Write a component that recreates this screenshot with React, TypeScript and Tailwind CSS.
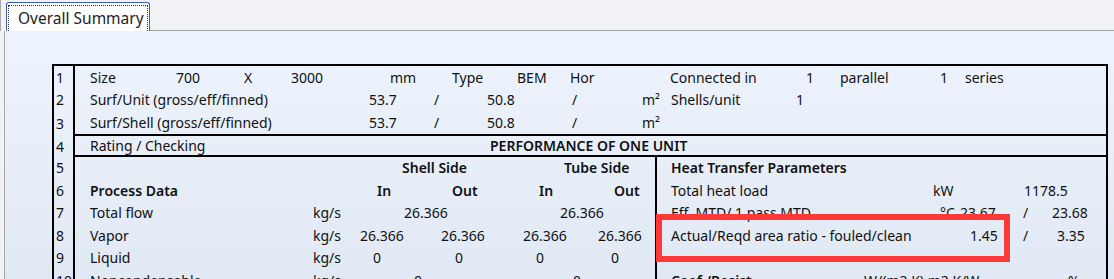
import React from "react";

const font = { fontFamily: '"Noto Sans", "Open Sans", sans-serif' };

// one table row: number cell on the left, content on the right
const Row = ({
  n,
  h = "h-[22.5px]",
  line = "",
  children,
}: {
  n: string;
  h?: string;
  line?: string;
  children?: React.ReactNode;
}) => (
  <div className="flex">
    <div className="flex w-[21px] shrink-0 items-center border-r-2 border-black pl-[2px]">
      <span className={h + " flex items-center"}>{n}</span>
    </div>
    <div className={"flex min-w-0 flex-1 " + line}>
      <div className={"flex w-full items-center " + h}>{children}</div>
    </div>
  </div>
);

const C = ({
  w = "",
  b = false,
  children,
}: {
  w?: string;
  b?: boolean;
  children?: React.ReactNode;
}) => (
  <span className={"shrink-0 whitespace-nowrap " + w + (b ? " font-semibold" : "")}>
    {children}
  </span>
);

// lower section: process data on the left, heat transfer on the right
const Split = ({ left, right }: { left?: React.ReactNode; right?: React.ReactNode }) => (
  <>
    <div className="flex h-full w-[580px] shrink-0 items-center pl-[15px]">{left}</div>
    <div className="flex h-full flex-1 items-center border-l-2 border-black pl-[14px]">{right}</div>
  </>
);

export default function App() {
  return (
    <div
      className="relative h-[279px] w-[1114px] overflow-hidden bg-[#f0f2f6] text-[14px] text-[#111]"
      style={font}
    >
      {/* tab strip */}
      <div className="flex h-[31px] border-l border-[#a8a8a8] pl-[5px]">
        <div className="mt-[2px] flex h-[29px] w-[144px] rounded-t-[3px] border border-b-0 border-[#3d5fb3] bg-white px-[1px] pt-[2px]">
          <div className="flex h-full w-full items-center border border-b-0 border-dotted border-[#333] pl-[9px] text-[15.5px] text-[#222]">
            Overall Summary
          </div>
        </div>
        <div className="flex-1 self-end border-b border-[#a0a0a0]" />
      </div>

      {/* content panel */}
      <div className="ml-[4px] h-[248px] border-l border-[#a8a8a8] bg-gradient-to-b from-[#eef4fd] to-[#e1e9f4] pl-[47px] pt-[33px]">
        <div className="w-[1056px] border-x-2 border-t-2 border-black">
          <Row n="1">
            <div className="flex pl-[15px]">
              <C w="w-[86px]">Size</C>
              <C w="w-[68px]">700</C>
              <C w="w-[47px]">X</C>
              <C w="w-[99px]">3000</C>
              <C w="w-[62px]">mm</C>
              <C w="w-[65px]">Type</C>
              <C w="w-[53px]">BEM</C>
              <C w="w-[100px]">Hor</C>
              <C w="w-[136px]">Connected in</C>
              <C w="w-[34px]">1</C>
              <C w="w-[100px]">parallel</C>
              <C w="w-[25px]">1</C>
              <C>series</C>
            </div>
          </Row>
          <Row n="2">
            <div className="flex pl-[15px]">
              <C w="w-[279px]">Surf/Unit (gross/eff/finned)</C>
              <C w="w-[65px]">53.7</C>
              <C w="w-[53px]">/</C>
              <C w="w-[85px]">50.8</C>
              <C w="w-[70px]">/</C>
              <C w="w-[29px]">m²</C>
              <C w="w-[125px]">Shells/unit</C>
              <C>1</C>
            </div>
          </Row>
          <Row n="3" line="border-b-2 border-black">
            <div className="flex pl-[15px]">
              <C w="w-[279px]">Surf/Shell (gross/eff/finned)</C>
              <C w="w-[65px]">53.7</C>
              <C w="w-[53px]">/</C>
              <C w="w-[85px]">50.8</C>
              <C w="w-[70px]">/</C>
              <C>m²</C>
            </div>
          </Row>
          <Row n="4" h="h-[19px]" line="border-b-2 border-black">
            <div className="flex pl-[15px]">
              <C w="w-[400px]">Rating / Checking</C>
              <C b>PERFORMANCE OF ONE UNIT</C>
            </div>
          </Row>
          <Row n="5">
            <Split
              left={
                <>
                  <C w="w-[312px]" />
                  <C w="w-[162px]" b>Shell Side</C>
                  <C b>Tube Side</C>
                </>
              }
              right={<C b>Heat Transfer Parameters</C>}
            />
          </Row>
          <Row n="6">
            <Split
              left={
                <>
                  <C w="w-[287px]" b>Process Data</C>
                  <C w="w-[75px]" b>In</C>
                  <C w="w-[87px]" b>Out</C>
                  <C w="w-[75px]" b>In</C>
                  <C b>Out</C>
                </>
              }
              right={
                <>
                  <C w="w-[262px]">Total heat load</C>
                  <C w="w-[91px]">kW</C>
                  <C>1178.5</C>
                </>
              }
            />
          </Row>
          <Row n="7">
            <Split
              left={
                <>
                  <C w="w-[223px]">Total flow</C>
                  <C w="w-[91px]">kg/s</C>
                  <C w="w-[156px]">26.366</C>
                  <C>26.366</C>
                </>
              }
              right={
                <>
                  <C w="w-[269px]">Eff. MTD/ 1 pass MTD</C>
                  <C w="w-[20px]">°C</C>
                  <C w="w-[63px]">23.67</C>
                  <C w="w-[29px]">/</C>
                  <C>23.68</C>
                </>
              }
            />
          </Row>
          <Row n="8">
            <Split
              left={
                <>
                  <C w="w-[223px]">Vapor</C>
                  <C w="w-[47px]">kg/s</C>
                  <C w="w-[81px]">26.366</C>
                  <C w="w-[82px]">26.366</C>
                  <C w="w-[75px]">26.366</C>
                  <C>26.366</C>
                </>
              }
              right={
                <>
                  <C w="w-[299px]">Actual/Reqd area ratio - fouled/clean</C>
                  <C w="w-[53px]">1.45</C>
                  <C w="w-[34px]">/</C>
                  <C>3.35</C>
                </>
              }
            />
          </Row>
          <Row n="9">
            <Split
              left={
                <>
                  <C w="w-[223px]">Liquid</C>
                  <C w="w-[60px]">kg/s</C>
                  <C w="w-[82px]">0</C>
                  <C w="w-[81px]">0</C>
                  <C w="w-[75px]">0</C>
                  <C>0</C>
                </>
              }
            />
          </Row>
          <Row n="10">
            <Split
              left={
                <>
                  <C w="w-[223px]">Noncondensable</C>
                  <C w="w-[101px]">kg/s</C>
                  <C w="w-[159px]">0</C>
                  <C>0</C>
                </>
              }
              right={
                <>
                  <C w="w-[193px]" b>Coef./Resist.</C>
                  <C w="w-[204px]">W/(m2 K) m2 K/W</C>
                  <C>%</C>
                </>
              }
            />
          </Row>
        </div>
      </div>

      {/* highlight box */}
      <div className="absolute left-[656px] top-[214px] h-[48px] w-[354px] border-[6px] border-[#ff3838]" />
    </div>
  );
}
